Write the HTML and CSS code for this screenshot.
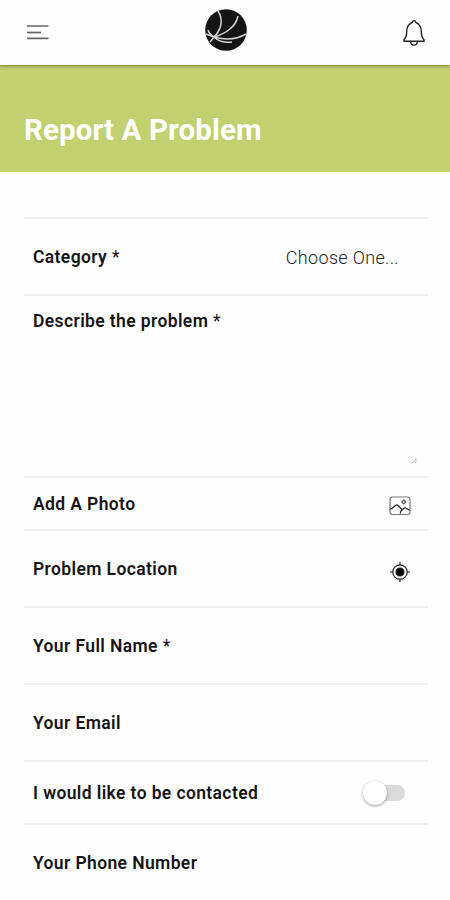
FILE: index.html
```html
<!DOCTYPE html>
<html lang="en">
<head>
<meta charset="utf-8">
<title>Report A Problem</title>
<link rel="stylesheet" href="styles.css">
</head>
<body>
<header class="topbar">
  <svg class="menu" viewBox="0 0 22 16"><path d="M0 2H21.500M0 14.300H21.500" /><path d="M0 8.500H14" /></svg>
  <svg class="logo" viewBox="0 0 42 42">
    <circle cx="21" cy="21" r="20.800" fill="#141414"/>
    <path d="M13 2C19 11 16 21 9 28M33 7C31 18 20 25 9 28M41 25C31 31 20 31 9 28C13 32 19 34 27 33M1 25L9 28L5 33M3 21Q4 25 9 28" fill="none" stroke="#d4d4d4" stroke-width="1.500"/>
  </svg>
  <svg class="bell" viewBox="0 0 24 28"><path d="M10.300 3.300C10.800 1 13.200 1 13.700 3.300C17.500 5 19.300 8 19.300 12.500C19.300 16.500 19.800 18.500 22 20.800V22.200H2V20.800C4.200 18.500 4.700 16.500 4.700 12.500C4.700 8 6.500 5 10.300 3.300Z"/><path d="M8.600 22.500C8.900 27.300 15.100 27.300 15.400 22.500"/></svg>
</header>
<main>
  <div class="banner"><h1>Report A Problem</h1></div>
  <form class="form">
    <div class="row"><span class="label">Category <i>*</i></span><span class="value">Choose One...</span></div>
    <div class="row message"><span class="label">Describe the problem <i>*</i></span>
      <svg class="grip" viewBox="0 0 6 6"><path d="M1 5.500L5.500 1M4 5L5.500 3.500"/></svg>
    </div>
    <div class="row photo"><span class="label">Add A Photo</span>
      <svg class="icon" viewBox="0 0 22 22"><rect x="1" y="2" width="20" height="17.500" rx="2.500" stroke="#777"/><path d="M1 14.500L3.500 13L6.800 10.200Q7.800 9.500 8.800 10.300L13 14.500M11.500 18.500V16.500L15 13.300Q16 12.500 17 13.300L21 15.500"/><path d="M14.800 5L16.800 7L14.800 9L12.800 7Z" stroke="#555"/></svg>
    </div>
    <div class="row"><span class="label">Problem Location</span>
      <svg class="icon locate" viewBox="0 0 22 22"><circle cx="11" cy="11" r="7.200"/><circle cx="11" cy="11" r="4" fill="#080808"/><path d="M11 1V4M11 18V21M1 11H4M18 11H21"/></svg>
    </div>
    <div class="row"><span class="label">Your Full Name <i>*</i></span></div>
    <div class="row"><span class="label">Your Email</span></div>
    <div class="row contact"><span class="label">I would like to be contacted</span><span class="toggle"><span class="knob"></span></span></div>
    <div class="row"><span class="label">Your Phone Number</span></div>
  </form>
</main>
</body>
</html>
```
FILE: styles.css
```css
* { box-sizing: border-box; }
body {
  margin: 0;
  height: 900px;
  overflow: hidden;
  background: #fefefe;
  color: #151515;
  font-family: Roboto, "Liberation Sans", sans-serif;
}
svg { display: block; fill: none; }
.topbar {
  position: relative;
  height: 65px;
  padding: 0 24px 0 27px;
  display: grid;
  grid-template-columns: 1fr 42px 1fr;
  background: #fefefe;
  box-shadow: 0 1px 3px rgba(60, 65, 30, .55);
}
.menu { width: 22px; height: 16px; margin-top: 24px; stroke: #666; stroke-width: 1.7; }
.logo { width: 42px; height: 42px; margin: 9px 0 0 -1px; }
.bell { width: 24px; height: 28px; margin-top: 19px; justify-self: end; stroke: #222; stroke-width: 1.4; }
.banner { height: 107px; padding: 48px 24px 0; background: #c2d070; }
h1 { margin: 0; color: #fff; font-size: 29.5px; line-height: 34px; font-weight: 700; letter-spacing: .1px; white-space: nowrap; }
.form { margin: 45px 22px 0 24px; }
.row {
  height: 77px;
  padding: 0 17px 0 9px;
  display: flex;
  align-items: center;
  justify-content: space-between;
  border-top: 2px solid #f1f1f1;
}
.label { font-size: 17.5px; line-height: 22px; font-weight: 600; letter-spacing: .38px; white-space: nowrap; }
.label i { font-style: normal; font-weight: 400; }
.value { margin: 2px 12px 0 0; font-size: 18px; line-height: 22px; font-weight: 300; letter-spacing: .33px; color: #222; }
.message { height: 182px; padding: 14px 11px 12px 9px; align-items: flex-start; }
.grip { width: 6px; height: 6px; align-self: flex-end; stroke: #888; stroke-width: .8; }
.photo { height: 53px; }
.icon { width: 22px; height: 22px; stroke: #222; stroke-width: 1.2; margin-top: 5px; }
.locate { margin-top: 6px; }
.contact { height: 63px; }
.toggle { width: 38px; height: 16px; margin: 1px 6px 0 0; border-radius: 8px; background: #dadada; }
.knob {
  display: block;
  width: 24px;
  height: 24px;
  margin: -4px 0 0 -4px;
  border-radius: 50%;
  background: #fff;
  box-shadow: 0 1px 3px rgba(0, 0, 0, .4);
}
```
